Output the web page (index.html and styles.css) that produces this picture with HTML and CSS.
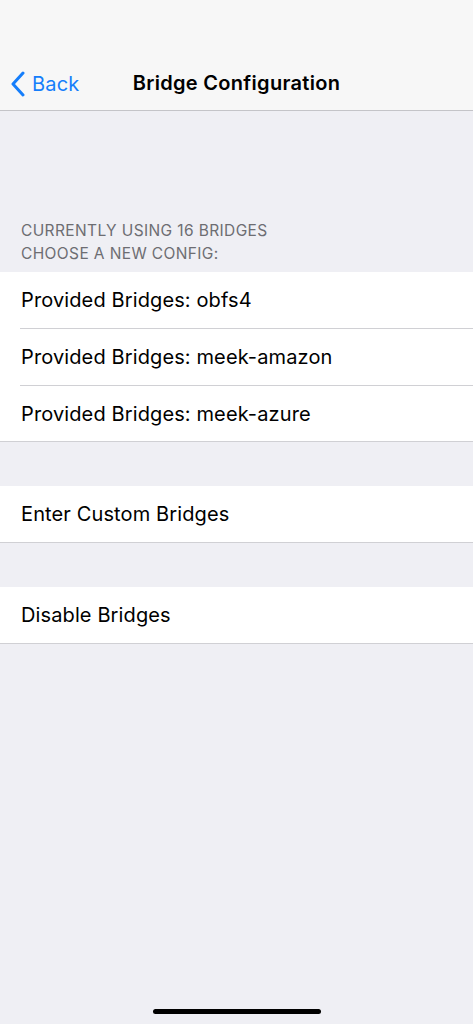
FILE: index.html
```html
<!DOCTYPE html>
<html lang="en">
<head>
  <meta charset="UTF-8">
  <meta name="viewport" content="width=device-width, initial-scale=1.0">
  <title>Bridge Configuration</title>
  <link rel="stylesheet" href="styles.css">
</head>
<body>
  <div class="screen">
    <header class="navbar">
      <a class="back" href="#">
        <svg class="chevron" width="16" height="26" viewBox="0 0 16 26">
          <path d="M13 2 L3 13 L13 24" fill="none" stroke="currentColor" stroke-width="3" stroke-linecap="round" stroke-linejoin="round"/>
        </svg>
        <span>Back</span>
      </a>
      <h1 class="title">Bridge Configuration</h1>
    </header>

    <main class="content">
      <div class="section-header">
        Currently using 16 bridges<br>
        Choose a new config:
      </div>
      <ul class="group">
        <li class="cell">Provided Bridges: obfs4</li>
        <li class="cell">Provided Bridges: meek-amazon</li>
        <li class="cell">Provided Bridges: meek-azure</li>
      </ul>

      <ul class="group spaced">
        <li class="cell">Enter Custom Bridges</li>
      </ul>

      <ul class="group spaced">
        <li class="cell">Disable Bridges</li>
      </ul>
    </main>

    <div class="home-indicator"></div>
  </div>
</body>
</html>
```

FILE: styles.css
```css
:root {
  --bg-grouped: #efeff4;
  --nav-bg: #f7f7f7;
  --separator: #d0d0d4;
  --tint: #157efb;
  --label: #000;
  --header-text: #6d6d72;
}
html, body {
  margin: 0;
  padding: 0;
}
body {
  font-family: Inter, "Noto Sans", Arial, sans-serif;
  background-color: var(--bg-grouped);
  color: var(--label);
  -webkit-font-smoothing: antialiased;
}
.screen {
  position: relative;
  height: 1024px;
  overflow: hidden;
}

/* Navigation bar */
.navbar {
  height: 111px;
  background-color: var(--nav-bg);
  border-bottom: 1px solid #c4c4c8;
  box-sizing: border-box;
  display: flex;
  align-items: flex-end;
  justify-content: center;
  padding-bottom: 12px;
  position: relative;
}
.back {
  position: absolute;
  left: 10px;
  bottom: 13px;
  display: flex;
  align-items: center;
  gap: 6px;
  color: var(--tint);
  text-decoration: none;
  font-size: 20px;
  letter-spacing: 0.2px;
}
.chevron { display: block; }
.title {
  margin: 0;
  font-size: 20px;
  font-weight: 600;
  letter-spacing: 0.3px;
  line-height: 30px;
}

/* Grouped table */
.content {
  padding-top: 108px;
}
.section-header {
  padding: 0 21px 7px;
  font-size: 15.5px;
  line-height: 23px;
  text-transform: uppercase;
  color: var(--header-text);
  letter-spacing: 0.38px;
}
.group {
  list-style: none;
  margin: 0;
  padding: 0;
  background: #fff;
  border-bottom: 1px solid var(--separator);
}
.group.spaced {
  margin-top: 44px;
}
.cell {
  height: 56px;
  display: flex;
  align-items: center;
  padding-left: 21px;
  font-size: 20px;
  letter-spacing: 0.12px;
  position: relative;
}
.cell + .cell {
  border-top: 1px solid var(--separator);
}
.cell + .cell:last-child {
  height: 55px;
}
/* inset separators start at the text edge */
.cell + .cell::before {
  content: "";
  position: absolute;
  left: 0;
  top: -1px;
  width: 20px;
  height: 1px;
  background: #fff;
}

.home-indicator {
  position: absolute;
  left: 153px;
  bottom: 10px;
  width: 168px;
  height: 5px;
  border-radius: 3px;
  background: #000;
}
```
